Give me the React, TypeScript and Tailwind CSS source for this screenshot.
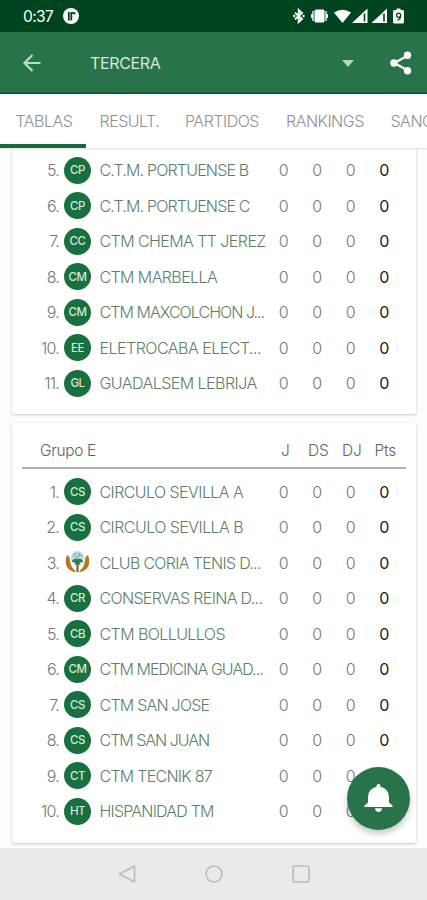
import React from 'react';
import clsx from 'clsx';

interface Team {
    position: number;
    initials: string;
    name: string;
    tracking: string;
    crest?: boolean;
}

const previousGroup: Team[] = [
    { position: 5, initials: 'CP', name: 'C.T.M. PORTUENSE B', tracking: 'tracking-[-0.82px]' },
    { position: 6, initials: 'CP', name: 'C.T.M. PORTUENSE C', tracking: 'tracking-[-0.82px]' },
    { position: 7, initials: 'CC', name: 'CTM CHEMA TT JEREZ', tracking: 'tracking-[-0.57px]' },
    { position: 8, initials: 'CM', name: 'CTM MARBELLA', tracking: 'tracking-[-0.6px]' },
    { position: 9, initials: 'CM', name: 'CTM MAXCOLCHON J...', tracking: 'tracking-[-0.95px]' },
    { position: 10, initials: 'EE', name: 'ELETROCABA ELECT...', tracking: 'tracking-[-0.51px]' },
    { position: 11, initials: 'GL', name: 'GUADALSEM LEBRIJA', tracking: 'tracking-[-0.54px]' },
];

const groupE: Team[] = [
    { position: 1, initials: 'CS', name: 'CIRCULO SEVILLA A', tracking: 'tracking-[-0.57px]' },
    { position: 2, initials: 'CS', name: 'CIRCULO SEVILLA B', tracking: 'tracking-[-0.55px]' },
    { position: 3, initials: '', name: 'CLUB CORIA TENIS D...', tracking: 'tracking-[-0.69px]', crest: true },
    { position: 4, initials: 'CR', name: 'CONSERVAS REINA D...', tracking: 'tracking-[-0.67px]' },
    { position: 5, initials: 'CB', name: 'CTM BOLLULLOS', tracking: 'tracking-[-0.58px]' },
    { position: 6, initials: 'CM', name: 'CTM MEDICINA GUAD...', tracking: 'tracking-[-0.94px]' },
    { position: 7, initials: 'CS', name: 'CTM SAN JOSE', tracking: 'tracking-[-0.77px]' },
    { position: 8, initials: 'CS', name: 'CTM SAN JUAN', tracking: 'tracking-[-1px]' },
    { position: 9, initials: 'CT', name: 'CTM TECNIK 87', tracking: 'tracking-[-0.74px]' },
    { position: 10, initials: 'HT', name: 'HISPANIDAD TM', tracking: 'tracking-[-0.8px]' },
];

const StatusBar: React.FC = () => (
    <div className="flex h-8 shrink-0 items-center justify-between bg-[#004520] pl-[23px] pr-[20px] text-white">
        <div className="flex items-center gap-[9px]">
            <span className="w-[31px] whitespace-nowrap pt-px text-[15.5px] tracking-[-0.6px]">0:37</span>
            <svg className="h-4 w-4" viewBox="0 0 16 16">
                <circle cx="8" cy="8" r="8" fill="#fff" />
                <path d="M5.8 4v8.500M8.300 12.500V4.800h2" fill="none" stroke="#004520" strokeWidth="1.8" />
                <circle cx="11.2" cy="5.3" r="1.2" fill="#004520" />
            </svg>
        </div>
        <svg className="h-4 w-[115px]" viewBox="0 0 115 16" fill="#fff">
            <path
                d="M3 4.800l7 6.200L6.700 14V2l3.300 3-7 6.200"
                fill="none"
                stroke="#fff"
                strokeWidth="1.900"
            />
            <circle cx="2.2" cy="8" r="1.2" />
            <circle cx="11.5" cy="8" r="1.2" />
            <rect x="22.500" y="1.500" width="10" height="13" rx="1.500" />
            <path d="M21 3v10M34 3v10M19.700 6v4M35.300 6v4" stroke="#fff" strokeWidth="1.300" />
            <path d="M42 4.500Q50.500 -1 59 4.500L50.500 15z" />
            <path d="M60 15L75.500 0.500V15z" />
            <path d="M79.500 15L95 0.500V15z" />
            <path d="M72.500 5.500v8M92 5.500v8" stroke="#004520" strokeWidth="1.600" />
            <path d="M104.500 0.500h4V2h2q1.500 0 1.500 1.500v10.500q0 1.500-1.500 1.500h-8q-1.500 0-1.500-1.500V3.500Q101 2 102.500 2h2z" />
            <path
                d="M108.700 7.300a2.100 2.100 0 1 1-4.200 0a2.100 2.100 0 1 1 4.200 0q0 4-3.200 5"
                fill="none"
                stroke="#004520"
                strokeWidth="1.300"
            />
        </svg>
    </div>
);

const AppBar: React.FC = () => (
    <div className="flex h-[62px] shrink-0 items-center border-b-2 border-[#11603a] bg-[#28734a] pl-[22px] pr-[14px] pt-[2px]">
        <svg className="h-5 w-5" viewBox="0 0 20 20" fill="none" stroke="#bcdcc9" strokeWidth="2.2">
            <path d="M18.5 10H2.5M10.5 2L2.5 10l8 8" />
        </svg>
        <span className="ml-12 grow text-[16px] tracking-[-0.35px] text-[#d6e8dc]">TERCERA</span>
        <svg className="h-[7px] w-3" viewBox="0 0 12 7" fill="#b5d6c1">
            <path d="M0 0h12L6 7z" />
        </svg>
        <svg className="ml-[36.500px] h-6 w-[23px]" viewBox="0 0 23 24" fill="#fff">
            <path d="M18 4.500L4.200 12l13.800 7.500" fill="none" stroke="#fff" strokeWidth="2.300" />
            <circle cx="17.500" cy="4.300" r="3.700" />
            <circle cx="3.900" cy="12" r="3.700" />
            <circle cx="17.500" cy="19.700" r="3.700" />
        </svg>
    </div>
);

const Tabs: React.FC = () => (
    <div className="z-10 flex h-[54px] shrink-0 overflow-hidden whitespace-nowrap bg-white text-[16px] font-light tracking-[-0.5px] text-[#909090] shadow-[0_1px_2px_rgba(0,0,0,0.14)]">
        <div className="w-[86px] shrink-0 border-b-[4px] border-[#19683f] pl-[15.500px] pt-[15px]">TABLAS</div>
        <div className="w-[85px] shrink-0 pl-[13.500px] pt-[15px]">RESULT.</div>
        <div className="w-[102px] shrink-0 pl-[14px] pt-[15px]">PARTIDOS</div>
        <div className="w-[104px] shrink-0 pl-[13px] pt-[15px]">RANKINGS</div>
        <div className="shrink-0 pl-[13.500px] pt-[15px]">SANC</div>
    </div>
);

const Crest: React.FC = () => (
    <svg className="h-[27px] w-[27px]" viewBox="0 0 27 27">
        <circle cx="13.500" cy="8.500" r="6.500" fill="#b7dce3" />
        <path d="M9 7l3-3M14 4l4 3M11 9l5-3" stroke="#669aa9" strokeWidth="1" />
        <path d="M3 6C0 14 2 21.500 12 23.500L10.500 21C7 18 6 13 5.500 8z" fill="#b7791f" />
        <path d="M24 6c3 8 1 15.500-9 17.500L16.500 21C20 18 21 13 21.500 8z" fill="#b7791f" />
        <path d="M7.500 13c1-3 4-4 6-3 2-1 5 0 6 3l-4 .5 1 3-3-2-3 2 1-3z" fill="#208554" />
        <path d="M13.500 12v11" stroke="#59612b" strokeWidth="2" />
    </svg>
);

const TeamRow: React.FC<{ team: Team }> = ({ team }) => (
    <div className="flex h-[35.5px] items-center text-[16px] font-light text-[#767676]">
        <span className="w-[47px] text-right tracking-[-0.8px]">{team.position}.</span>
        <span className="ml-[5px] flex w-[27px] shrink-0 justify-center">
            {team.crest ? (
                <Crest />
            ) : (
                <span className="flex h-[27px] w-[27px] items-center justify-center rounded-full bg-[#18703f] pt-px text-[11.5px] font-medium tracking-[-0.5px] text-[#d3e8da]">
                    {team.initials}
                </span>
            )}
        </span>
        <span className={clsx('ml-[8.500px] w-[167.500px] whitespace-nowrap text-[#5b8068]', team.tracking)}>
            {team.name}
        </span>
        <div className="grid grid-cols-[33.500px_33.500px_33.500px_33.500px] text-center">
            <span>0</span>
            <span>0</span>
            <span>0</span>
            <span className="font-normal text-[#1c1c1c]">0</span>
        </div>
    </div>
);

const TableHeader: React.FC<{ title: string }> = ({ title }) => (
    <div className="mx-[10px] flex h-[46px] items-center border-b-2 border-[#b0b0b0] pt-[11px] text-[15.5px] font-light text-[#626262]">
        <span className="w-[246px] shrink-0 pl-[18px] tracking-[-0.35px]">{title}</span>
        <div className="grid grid-cols-[33.500px_33.500px_33.500px_33.500px] text-center tracking-[-0.3px]">
            <span className="pl-px">J</span>
            <span>DS</span>
            <span>DJ</span>
            <span>Pts</span>
        </div>
    </div>
);

const Card: React.FC<{ className?: string; children: React.ReactNode }> = ({ className, children }) => (
    <div className={clsx('bg-white shadow-[0_1px_3px_rgba(0,0,0,0.22)]', className)}>{children}</div>
);

const NavigationBar: React.FC = () => (
    <div className="flex h-[52px] shrink-0 items-center justify-center gap-[69px] bg-[#eaeaea]">
        <svg className="h-[18px] w-[18px]" viewBox="0 0 18 18" fill="none" stroke="#bdbdbd" strokeWidth="1.700">
            <path d="M16.500 1v16L1.500 9z" strokeLinejoin="round" />
        </svg>
        <svg className="h-[18px] w-[18px]" viewBox="0 0 18 18" fill="none" stroke="#bdbdbd" strokeWidth="1.700">
            <circle cx="9" cy="9" r="8" />
        </svg>
        <svg className="h-[18px] w-[18px]" viewBox="0 0 18 18" fill="none" stroke="#bdbdbd" strokeWidth="1.700">
            <rect x="1" y="1" width="16" height="16" rx="2" />
        </svg>
    </div>
);

export default function App() {
    return (
        <div className="relative flex h-[900px] w-[427px] flex-col overflow-hidden bg-[#fdfdfd] font-['Inter','Liberation_Sans',sans-serif]">
            <StatusBar />
            <AppBar />
            <Tabs />
            <main className="flex h-[700px] flex-col gap-[9px] px-3 pr-[11px]">
                <Card className="h-[266px] rounded-b-[2px] pt-[4.500px]">
                    {previousGroup.map((team) => (
                        <TeamRow key={team.position} team={team} />
                    ))}
                </Card>
                <Card className="h-[420px] rounded-[2px]">
                    <TableHeader title="Grupo E" />
                    <div className="pt-[5px]">
                        {groupE.map((team) => (
                            <TeamRow key={team.position} team={team} />
                        ))}
                    </div>
                </Card>
            </main>
            <NavigationBar />
            <button
                aria-label="Notificaciones"
                className="absolute left-[347px] top-[767px] flex h-[63px] w-[63px] items-center justify-center rounded-full bg-[#28734a] shadow-[0_4px_6px_rgba(0,0,0,0.22)]"
            >
                <svg className="h-[29px] w-[29px]" viewBox="0 0 29 29" fill="#fff">
                    <path d="M14.500 0q2 0 2 2.800Q25 5 25 13v5.500l3.500 3V23H.5v-1.500l3.500-3V13Q4 5 12.500 2.800 12.500 0 14.500 0zM11 24.200h7Q17.500 28 14.500 28T11 24.200z" />
                </svg>
            </button>
        </div>
    );
}
